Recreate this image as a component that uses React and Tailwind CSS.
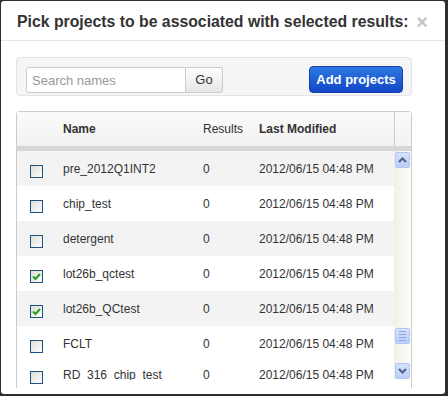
import React from 'react';

const rows = [
  { name: 'pre_2012Q1INT2', checked: false, shade: true },
  { name: 'chip_test', checked: false, shade: false },
  { name: 'detergent', checked: false, shade: true },
  { name: 'lot26b_qctest', checked: true, shade: false },
  { name: 'lot26b_QCtest', checked: true, shade: true },
  { name: 'FCLT', checked: false, shade: false },
];

const Checkbox = ({ checked }) => (
  <span className="flex h-[13px] w-[13px] items-center justify-center border border-[#1c5180] bg-gradient-to-br from-[#dcdcd7] to-white">
    {checked && (
      <svg width="11" height="11" viewBox="0 0 11 11">
        <polyline
          points="2,5.5 4.5,8 9,3"
          fill="none"
          stroke="#21a121"
          strokeWidth="2"
        />
      </svg>
    )}
  </span>
);

const ScrollButton = ({ dir }) => (
  <div className="mx-[1px] flex h-[16px] w-[15px] items-center justify-center rounded-[2px] border border-[#b4c6f2] bg-gradient-to-b from-[#d7e2fd] to-[#b9cdfa]">
    <svg width="9" height="6" viewBox="0 0 9 6">
      <polyline
        points={dir === 'up' ? '1,5 4.5,1.5 8,5' : '1,1 4.5,4.5 8,1'}
        fill="none"
        stroke="#4d6185"
        strokeWidth="2"
      />
    </svg>
  </div>
);

const Row = ({ name, checked, shade }) => (
  <div
    className={`flex h-[35px] items-center ${shade ? 'bg-[#f3f3f3]' : 'bg-white'}`}
  >
    <div className="w-[46px] pl-[13px] pt-[5px]">
      <Checkbox checked={checked} />
    </div>
    <div className="w-[140px]">{name}</div>
    <div className="w-[56px]">0</div>
    <div>2012/06/15 04:48 PM</div>
  </div>
);

export default function App() {
  return (
    <div
      className="h-[396px] w-[448px] bg-[#2e2e2e] pl-[1px] pt-[1px] text-[12px] text-[#333]"
      style={{ fontFamily: '"Liberation Sans", Arial, sans-serif' }}
    >
      <div className="h-[393px] w-[444px] overflow-hidden rounded-[3px] bg-white">
        <div className="flex h-[40px] items-center justify-between border-b border-[#e5e5e5] pl-[16px] pr-[17px] pt-[2px]">
          <h3 className="text-[15.8px] font-bold text-[#333]">
            Pick projects to be associated with selected results:
          </h3>
          <span className="text-[20px] font-bold leading-none text-[#c4c4c4]">
            ×
          </span>
        </div>

        <div className="pl-[15px] pt-[16px]">
          <div className="flex h-[39px] w-[396px] items-start justify-between rounded-[4px] border border-[#e3e3e3] bg-[#f5f5f5] pl-[9px] pr-[8px] pt-[9px]">
            <div className="flex">
              <input
                placeholder="Search names"
                className="h-[26px] w-[160px] rounded-l-[3px] border border-[#ccc] bg-white px-[5px] text-[13px] text-[#555] placeholder:text-[#999] focus:outline-none"
              />
              <button className="h-[26px] w-[37px] rounded-r-[3px] border border-l-0 border-[#ccc] bg-gradient-to-b from-white to-[#e6e6e6] text-[13px] text-[#333]">
                Go
              </button>
            </div>
            <button className="-mt-[1px] h-[27px] w-[94px] rounded-[4px] border border-[#1540b0] bg-gradient-to-b from-[#2e78e2] to-[#1445c6] text-[13px] font-bold text-white">
              Add projects
            </button>
          </div>

          <div className="mt-[15px] w-[396px] rounded-t-[4px] border-x border-t border-[#ccc]">
            <div className="flex h-[34px] items-center bg-gradient-to-b from-[#fafafa] to-[#f2f2f2]">
              <div className="w-[46px]" />
              <div className="w-[140px] font-bold">Name</div>
              <div className="w-[56px]">Results</div>
              <div className="flex-1 font-bold">Last Modified</div>
              <div className="h-full w-[17px] border-l border-[#ccc]" />
            </div>
            <div className="h-[5px] bg-[#d6d6d6]" />

            <div className="flex h-[237px] overflow-hidden">
              <div className="flex-1">
                {rows.map((r) => (
                  <Row key={r.name} {...r} />
                ))}
                <div className="flex items-start pt-[7px]">
                  <div className="w-[46px] pl-[13px] pt-[3px]">
                    <Checkbox checked={false} />
                  </div>
                  <div className="h-[12px] w-[140px] overflow-hidden leading-[14px]">
                    RD_316_chip_test
                  </div>
                  <div className="w-[56px] leading-[14px]">0</div>
                  <div className="leading-[14px]">2012/06/15 04:48 PM</div>
                </div>
              </div>

              <div className="flex h-[228px] w-[17px] flex-col bg-gradient-to-r from-[#f1efe7] to-[#fdfdfb] pt-[1px]">
                <ScrollButton dir="up" />
                <div className="mx-[1px] mt-[160px] flex h-[16px] w-[15px] flex-col items-center justify-center gap-[2px] rounded-[2px] border border-[#b4c6f2] bg-gradient-to-b from-[#d7e2fd] to-[#b9cdfa]">
                  <span className="h-px w-[7px] bg-[#8ea6e0]" />
                  <span className="h-px w-[7px] bg-[#8ea6e0]" />
                  <span className="h-px w-[7px] bg-[#8ea6e0]" />
                  <span className="h-px w-[7px] bg-[#8ea6e0]" />
                </div>
                <div className="mt-[19px]">
                  <ScrollButton dir="down" />
                </div>
              </div>
            </div>
          </div>
        </div>
      </div>
    </div>
  );
}
